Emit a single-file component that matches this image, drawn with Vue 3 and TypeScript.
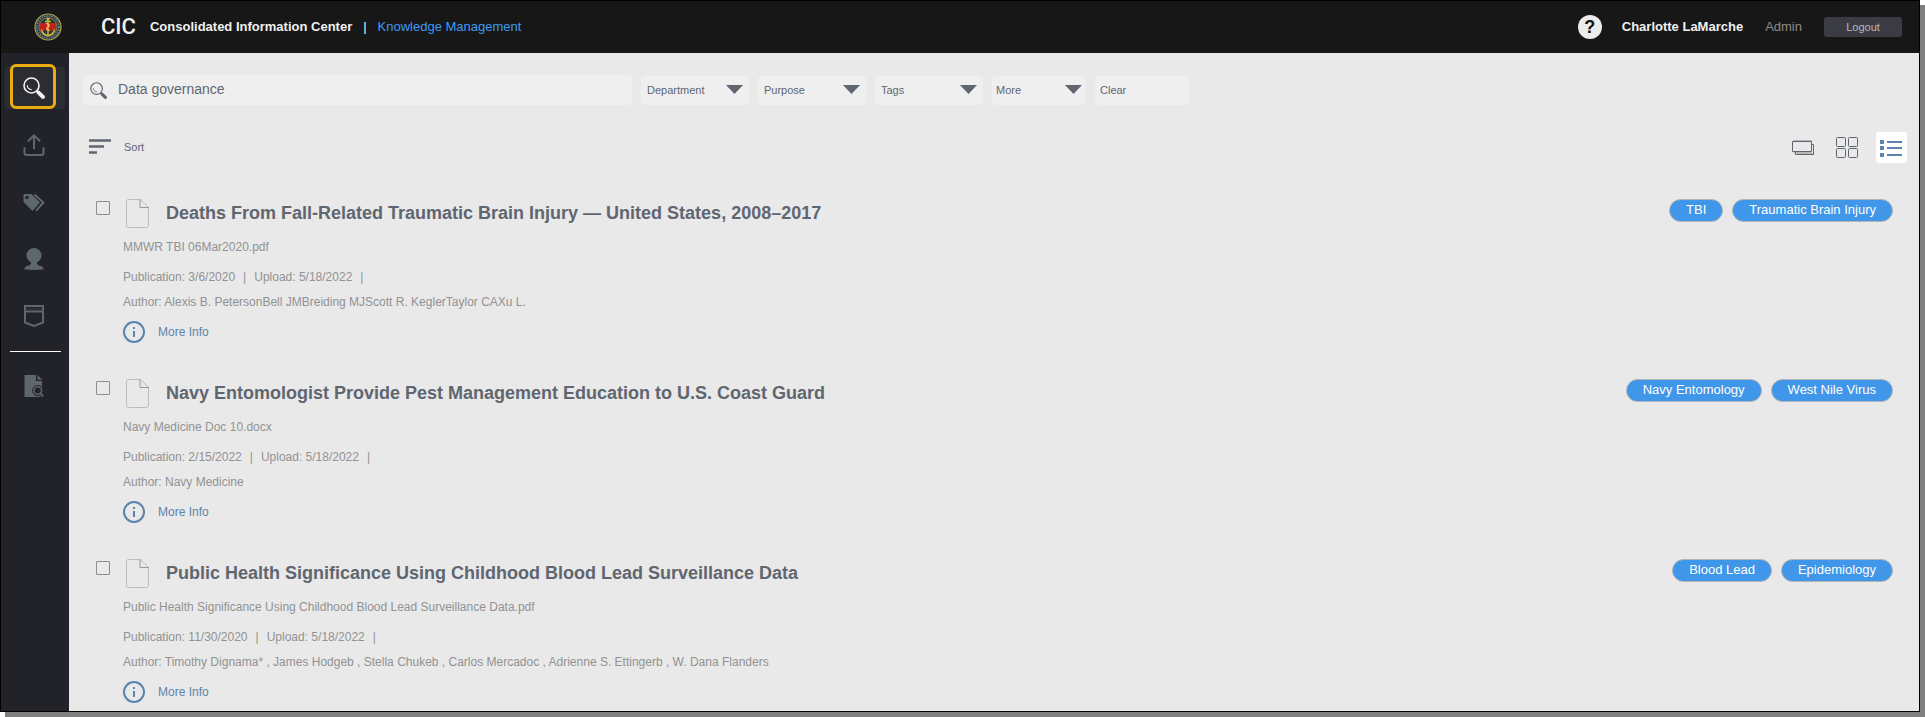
<script setup lang="ts">
import { ref } from 'vue'

interface Doc {
  title: string
  file: string
  published: string
  uploaded: string
  authors: string
  tags: string[]
}

const query = ref('Data governance')
const filters = ['Department', 'Purpose', 'Tags', 'More']

const docs: Doc[] = [
  {
    title: 'Deaths From Fall-Related Traumatic Brain Injury — United States, 2008–2017',
    file: 'MMWR TBI 06Mar2020.pdf',
    published: '3/6/2020',
    uploaded: '5/18/2022',
    authors: 'Alexis B. PetersonBell JMBreiding MJScott R. KeglerTaylor CAXu L.',
    tags: ['TBI', 'Traumatic Brain Injury'],
  },
  {
    title: 'Navy Entomologist Provide Pest Management Education to U.S. Coast Guard',
    file: 'Navy Medicine Doc 10.docx',
    published: '2/15/2022',
    uploaded: '5/18/2022',
    authors: 'Navy Medicine',
    tags: ['Navy Entomology', 'West Nile Virus'],
  },
  {
    title: 'Public Health Significance Using Childhood Blood Lead Surveillance Data',
    file: 'Public Health Significance Using Childhood Blood Lead Surveillance Data.pdf',
    published: '11/30/2020',
    uploaded: '5/18/2022',
    authors: 'Timothy Dignama* , James Hodgeb , Stella Chukeb , Carlos Mercadoc , Adrienne S. Ettingerb , W. Dana Flanders',
    tags: ['Blood Lead', 'Epidemiology'],
  },
]
</script>

<template>
  <div class="page">
    <div class="window">
      <header class="topbar">
        <a class="logo" href="#" aria-label="Home">
          <svg width="28" height="28" viewBox="0 0 28 28">
            <circle cx="14" cy="14" r="13" fill="#2b3b46" stroke="#b3a545" stroke-width="1.2" />
            <circle cx="14" cy="14" r="11" fill="none" stroke="#77858a" stroke-width="1.6" stroke-dasharray="1.3 1.2" />
            <circle cx="14" cy="14" r="9" fill="#1d3a35" stroke="#9c9146" stroke-width="0.8" />
            <path d="M6 10h16v7.500H6z" fill="#c3211f" />
            <path d="M14 5v18M11 8.500h6M7.500 16.500c.7 3.500 3 5.500 6.500 6.300 3.500-.8 5.800-2.800 6.500-6.300" fill="none" stroke="#dcb23c" stroke-width="1.4" />
            <path d="M12 10.500c4 .5 4 2.500 2 3.500s-2.200 2.800 1.600 3.600" fill="none" stroke="#f0cf62" stroke-width="1.2" />
            <circle cx="14" cy="6" r="1.500" fill="#dcb23c" />
          </svg>
        </a>
        <span class="brand">CIC</span>
        <span class="brand-name">Consolidated Information Center</span>
        <span class="divider">|</span>
        <a class="section" href="#">Knowledge Management</a>
        <div class="account">
          <button class="help" aria-label="Help">?</button>
          <span class="user">Charlotte LaMarche</span>
          <a class="admin" href="#">Admin</a>
          <button class="logout">Logout</button>
        </div>
      </header>

      <div class="body">
        <nav class="sidebar" aria-label="Main">
          <button class="nav active" aria-label="Search">
            <svg width="22" height="22" viewBox="0 0 22 22">
              <circle cx="8.500" cy="8.500" r="7.500" fill="none" stroke="currentColor" stroke-width="1.6" />
              <path d="M4.200 8c.1 2.700 1.800 4.500 4.600 4.700" fill="none" stroke="currentColor" stroke-width="1.1" />
              <path d="M13.500 13.500l2 2" stroke="currentColor" stroke-width="1.5" />
              <path d="M15.600 15.600l4.300 4.300" stroke="currentColor" stroke-width="4" stroke-linecap="round" />
            </svg>
          </button>
          <button class="nav" aria-label="Upload">
            <svg width="22" height="22" viewBox="0 0 22 22" fill="none" stroke="currentColor" stroke-width="2" stroke-linecap="round" stroke-linejoin="round">
              <path d="M1.500 14v5a2 2 0 0 0 2 2h15a2 2 0 0 0 2-2v-5M11 14.500V1.200M5.500 6.700L11 1.200l5.500 5.500" />
            </svg>
          </button>
          <button class="nav" aria-label="Tags">
            <svg width="22" height="22" viewBox="0 0 22 22">
              <path fill="currentColor" fill-rule="evenodd" d="M.5 4a1 1 0 0 1 1-1h7L17 11.500 9.500 20l-9-9zM4 4.800a1.700 1.700 0 1 0 0 3.400 1.700 1.700 0 0 0 0-3.400z" />
              <path d="M11.500 3.500l8.800 8-7.300 8.300" fill="none" stroke="currentColor" stroke-width="2" />
            </svg>
          </button>
          <button class="nav" aria-label="Profile">
            <svg width="22" height="22" viewBox="0 0 22 22" fill="currentColor">
              <circle cx="11" cy="7.500" r="7.500" />
              <path d="M8.300 13h5.400c0 3 .8 4 3.300 4.800 2.300.8 3.500 1.500 3.700 3.500Q11 22.700 1.300 21.300c.2-2 1.400-2.700 3.700-3.500C7.500 17 8.300 16 8.300 13z" />
            </svg>
          </button>
          <button class="nav" aria-label="Collections">
            <svg width="22" height="22" viewBox="0 0 22 22" fill="none" stroke="currentColor" stroke-width="2">
              <path d="M2 1h18v16.500L11 21l-9-3.500zM2 6.500h18" />
              <path d="M2 4h18" stroke-width="1" opacity=".4" />
            </svg>
          </button>
          <hr class="rule" />
          <button class="nav" aria-label="Document search">
            <svg width="22" height="22" viewBox="0 0 22 22">
              <path d="M1.500 0H13v6h6v16H1.500zM14.500 0L19 4.700h-4.500z" fill="currentColor" />
              <path d="M17.500 18.500l2.500 2.500" stroke="#222328" stroke-width="4" />
              <circle cx="14.800" cy="15.500" r="5.500" fill="#222328" />
              <circle cx="14.800" cy="15.500" r="3.800" fill="#222328" stroke="currentColor" stroke-width="1.6" />
              <path d="M17.500 18.500l2.700 2.700" stroke="currentColor" stroke-width="2" />
            </svg>
          </button>
        </nav>

        <main class="content">
          <form class="filters" @submit.prevent>
            <label class="search">
              <svg width="17" height="17" viewBox="0 0 22 22">
                <circle cx="8.500" cy="8.500" r="7.500" fill="none" stroke="currentColor" stroke-width="1.5" />
                <path d="M4.200 8c.1 2.700 1.800 4.500 4.600 4.700" fill="none" stroke="currentColor" stroke-width="1.1" />
                <path d="M13.500 13.500l2 2" stroke="currentColor" stroke-width="1.5" />
                <path d="M15.600 15.600l4.300 4.300" stroke="currentColor" stroke-width="4" stroke-linecap="round" />
              </svg>
              <input v-model="query" type="text" aria-label="Search documents" />
            </label>
            <div v-for="name in filters" :key="name" class="filter" :class="{ short: name === 'More' }">
              <select :aria-label="name">
                <option>{{ name }}</option>
              </select>
              <svg class="caret" width="17" height="9" viewBox="0 0 17 9"><path d="M0 0h17L8.500 9z" fill="currentColor" /></svg>
            </div>
            <button class="clear" type="reset">Clear</button>
          </form>

          <div class="tools">
            <button class="sort">
              <svg width="22" height="15" viewBox="0 0 22 15" stroke="currentColor" stroke-width="2.4">
                <path d="M0 1.500h22M0 7.500h15M0 13.500h8" />
              </svg>
              Sort
            </button>
            <div class="views">
              <button class="view" aria-label="Card view">
                <svg width="22" height="22" viewBox="0 0 22 22" fill="none" stroke="currentColor">
                  <path d="M1 3.500h19M1.500 15.500h18M4.500 16.500h17" stroke="#b4b7ba" />
                  <path d="M.5 4.500h19v10H.5zM19.500 7.500h2v10h-18v-3" />
                </svg>
              </button>
              <button class="view" aria-label="Grid view">
                <svg width="22" height="22" viewBox="0 0 22 22" fill="none" stroke="currentColor">
                  <rect x=".5" y=".5" width="9" height="9" rx="1" />
                  <rect x="12.500" y=".5" width="9" height="9" rx="1" />
                  <rect x=".5" y="11.500" width="9" height="9" rx="1" />
                  <rect x="12.500" y="11.500" width="9" height="9" rx="1" />
                </svg>
              </button>
              <button class="view selected" aria-label="List view">
                <svg width="22" height="22" viewBox="0 0 22 22" fill="currentColor">
                  <path d="M0 3h4v4H0zM0 9h4v4H0zM0 16h4v4H0zM7 4h15v2H7zM7 10h15v2H7zM7 17h15v2H7z" />
                </svg>
              </button>
            </div>
          </div>

          <article v-for="doc in docs" :key="doc.title" class="doc">
            <input class="pick" type="checkbox" :aria-label="'Select ' + doc.title" />
            <div class="details">
              <div class="heading">
                <svg class="file" width="24" height="29" viewBox="0 0 24 29" fill="none" stroke="#bcbcbc">
                  <path d="M2.500 .5h12l8 8v18a2 2 0 0 1-2 2h-18a2 2 0 0 1-2-2v-24a2 2 0 0 1 2-2z" />
                  <path d="M14 .5v8h9" stroke="#9a9a9a" />
                </svg>
                <h2>{{ doc.title }}</h2>
              </div>
              <p class="filename">{{ doc.file }}</p>
              <p class="dates">
                <span>Publication: {{ doc.published }}</span><span>|</span>
                <span>Upload: {{ doc.uploaded }}</span><span>|</span>
              </p>
              <p class="authors">Author: {{ doc.authors }}</p>
              <button class="more">
                <svg width="22" height="22" viewBox="0 0 22 22">
                  <circle cx="11" cy="11" r="10" fill="none" stroke="currentColor" stroke-width="2" />
                  <path d="M10 6h2v2h-2zM10 10h2v6h-2z" fill="currentColor" />
                </svg>
                More Info
              </button>
            </div>
            <div class="tags">
              <a v-for="tag in doc.tags" :key="tag" class="tag" href="#">{{ tag }}</a>
            </div>
          </article>
        </main>
      </div>
    </div>
  </div>
</template>

<style>
body {
  background: #fff;
}
</style>

<style scoped>
.page {
  height: 100vh;
  padding: 0 5px 5px 0;
  box-sizing: border-box;
  overflow: hidden;
}
.window {
  display: flex;
  flex-direction: column;
  box-sizing: border-box;
  height: 100%;
  overflow: hidden;
  border: 1px solid #000;
  box-shadow: 5px 5px 0 #808080;
  background: #e9e9e9;
  color: #5f6670;
  font: 12px/16px "Liberation Sans", Arial, sans-serif;
}
button {
  padding: 0;
  border: 0;
  background: none;
  color: inherit;
  font: inherit;
  cursor: pointer;
}
a {
  color: inherit;
  text-decoration: none;
}
svg {
  display: block;
  flex: none;
}
.topbar {
  display: flex;
  flex: none;
  align-items: center;
  height: 52px;
  padding: 0 17px 0 33px;
  box-sizing: border-box;
  background: #171717;
  color: #f0f0f0;
  font-size: 13px;
}
.brand {
  margin-left: 39px;
  font: 500 22px/24px Roboto, "Liberation Sans", sans-serif;
}
.brand-name {
  margin-left: 14px;
  font-weight: bold;
}
.divider {
  margin: 0 11px;
}
.section {
  color: #3d9bf5;
}
.account {
  display: flex;
  align-items: center;
  margin-left: auto;
}
.help {
  width: 24px;
  height: 24px;
  border-radius: 50%;
  background: #ececec;
  color: #111;
  font-size: 18px;
  font-weight: bold;
}
.user {
  margin-left: 20px;
  font-weight: bold;
}
.admin {
  margin: 0 22px;
  color: #8c8c8c;
}
.logout {
  width: 78px;
  height: 20px;
  border-radius: 3px;
  background: #3a3b43;
  color: #b9b9b9;
  font-size: 11px;
}
.body {
  display: flex;
  flex: 1;
  min-height: 0;
}
.sidebar {
  display: flex;
  flex: none;
  flex-direction: column;
  align-items: center;
  width: 68px;
  padding: 14px 0;
  box-sizing: border-box;
  background: #222328;
  color: #5f676e;
}
.nav {
  display: grid;
  flex: none;
  place-items: center;
  width: 60px;
  height: 42px;
  margin-bottom: 15px;
  padding-right: 2px;
}
.nav.active {
  position: relative;
  border-radius: 3px;
  background: #2c2d32;
  color: #f4f4f4;
}
.nav.active::after {
  content: "";
  position: absolute;
  inset: -3px 9px 0 5px;
  border: 3px solid #e9ad12;
  border-radius: 6px;
}
.rule {
  width: 51px;
  height: 1px;
  margin: -1px 0 13px;
  border: 0;
  background: #fff;
}
.content {
  flex: 1;
  min-width: 0;
  padding: 22px 12px 0 14px;
}
.filters {
  display: flex;
  align-items: flex-end;
  gap: 9px;
  font-size: 11px;
}
.search {
  display: flex;
  align-items: center;
  width: 549px;
  height: 30px;
  padding-left: 7px;
  box-sizing: border-box;
  border-radius: 4px;
  background: #efefef;
}
.search input {
  flex: 1;
  min-width: 0;
  margin-left: 11px;
  padding: 0 0 2px;
  border: 0;
  outline: 0;
  background: none;
  color: #5f6670;
  font: 14px/20px "Liberation Sans", Arial, sans-serif;
}
.filter {
  position: relative;
  width: 108px;
  height: 29px;
}
.filter.short {
  width: 94px;
}
.filter select {
  width: 100%;
  height: 100%;
  padding: 0 6px 2px;
  border: 0;
  border-radius: 4px;
  appearance: none;
  background: #efefef;
  color: inherit;
  font: inherit;
}
.filter.short select {
  padding-left: 4px;
}
.caret {
  position: absolute;
  top: 9px;
  right: 6px;
  pointer-events: none;
}
.filter.short .caret {
  right: 4px;
}
.clear {
  width: 95px;
  height: 29px;
  padding: 0 0 2px 5px;
  border-radius: 4px;
  background: #efefef;
  text-align: left;
}
.tools {
  display: flex;
  align-items: center;
  justify-content: space-between;
  margin-top: 27px;
  padding-left: 6px;
}
.sort {
  display: flex;
  align-items: center;
  gap: 13px;
  padding-bottom: 2px;
  font-size: 11px;
}
.views {
  display: flex;
  gap: 13px;
}
.view {
  display: grid;
  align-items: center;
  width: 31px;
  height: 31px;
  padding: 0 5px 0 4px;
  border-radius: 3px;
}
.view.selected {
  background: #fff;
  color: #5b83ad;
}
.doc {
  display: flex;
  align-items: flex-start;
  height: 144px;
  margin-top: 36px;
  padding: 0 14px 0 13px;
}
.pick {
  width: 14px;
  height: 14px;
  margin: 2px 13px 0 0;
  border: 1px solid #8e8e8e;
  border-radius: 1px;
  appearance: none;
}
.details {
  flex: 1;
  min-width: 0;
  color: #929292;
}
.heading {
  display: flex;
  align-items: center;
  gap: 16px;
  padding-left: 3px;
}
h2 {
  margin: 0;
  padding-bottom: 2px;
  color: #5f6670;
  font-size: 18px;
  line-height: 24px;
}
p {
  margin: 0;
}
.filename {
  margin-top: 11px;
}
.dates {
  display: flex;
  gap: 8px;
  margin-top: 14px;
}
.authors {
  margin-top: 9px;
}
.more {
  display: flex;
  align-items: center;
  gap: 13px;
  margin-top: 11px;
  color: #5b83ad;
}
.tags {
  display: flex;
  gap: 9px;
}
.tag {
  padding: 0 16px 1px;
  border: 1px solid #b5b5b5;
  border-radius: 12px;
  background: #4096e8;
  color: #fff;
  font-size: 13px;
  line-height: 20px;
}
</style>
